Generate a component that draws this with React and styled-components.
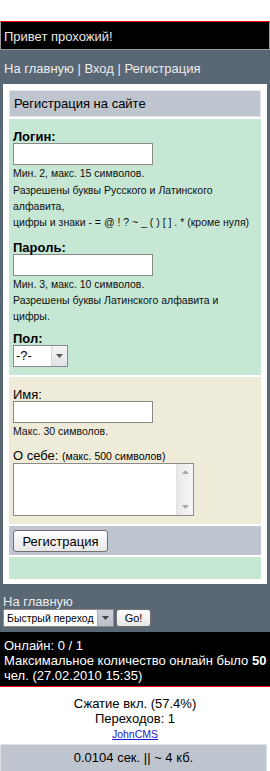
import React from 'react'
import styled, { createGlobalStyle } from 'styled-components'

const GlobalStyle = createGlobalStyle`
  body {
    margin: 0;
    background: #fff;
  }
`

const Page = styled.div`
  width: 270px;
  font-family: "Liberation Sans", Arial, sans-serif;
  font-size: 13px;
  line-height: 15px;
  color: #000;
`

const TopSpace = styled.div`
  height: 21px;
`

const Hello = styled.div`
  background: #000;
  color: #e8e8e8;
  border: 1px solid #999;
  border-top-color: #f00;
  padding: 7px 3px 5px;
`

const Main = styled.div`
  background: #5a6774;
`

const Nav = styled.div`
  padding: 10.5px 4px 8.5px;
  color: #ececec;
`

const NavLink = styled.a`
  color: inherit;
  text-decoration: none;
`

const Box = styled.div`
  margin: 0 3px;
  background: #fff;
  padding: 6px 6px 5px;
  display: flex;
  flex-direction: column;
  gap: 2px;
`

const Title = styled.div`
  background: #bec5cf;
  border: 1px solid #e2e6ea;
  padding: 5px 4px;
`

const Section = styled.div`
  background: ${p => p.$bg};
  padding: ${p => p.$pad};
  min-height: ${p => p.$h || 0}px;
`

const Label = styled.div`
  font-weight: ${p => (p.$bold ? 'bold' : 'normal')};
  line-height: 13px;
  margin-top: ${p => p.$mt}px;
  white-space: nowrap;
`

const TextInput = styled.input`
  display: block;
  box-sizing: border-box;
  width: 140px;
  height: 22px;
  margin: 0;
  padding: 2px 3px;
  border: 1px solid #8a8a8a;
  background: #fff;
  font: 13px "Liberation Sans", Arial, sans-serif;
`

const Hint = styled.div`
  font-size: 10.5px;
  line-height: 16.3px;
  white-space: nowrap;
  color: #111;
`

const SmallNote = styled.span`
  font-size: 10.5px;
  line-height: 13px;
`

const SelectBox = styled.div`
  display: flex;
  box-sizing: border-box;
  width: ${p => p.$w}px;
  height: ${p => p.$h}px;
  border: 1px solid #8a8a8a;
  background: #fff;
`

const SelectField = styled.select`
  appearance: none;
  flex: 1;
  min-width: 0;
  border: 0;
  margin: 0;
  padding: 0 0 0 ${p => p.$pl}px;
  background: transparent;
  font-family: "Liberation Sans", Arial, sans-serif;
  font-size: ${p => p.$fs}px;
  color: #000;
  outline: none;
`

const ArrowButton = styled.span`
  width: 15px;
  flex: none;
  display: flex;
  align-items: center;
  justify-content: center;
  border-left: 1px solid ${p => (p.$dark ? '#a9b0bc' : '#d4d8de')};
  background: ${p =>
    p.$dark
      ? 'linear-gradient(#ccd1d9, #b9c0cb)'
      : 'linear-gradient(#f3f4f6, #dfe2e7)'};
`

const TextAreaBox = styled.div`
  display: flex;
  box-sizing: border-box;
  width: 181px;
  height: 53px;
  border: 1px solid #8a8a8a;
  background: #fff;
`

const TextArea = styled.textarea`
  flex: 1;
  border: 0;
  margin: 0;
  resize: none;
  outline: none;
  background: transparent;
  overflow: hidden;
`

const ScrollBar = styled.div`
  width: 16px;
  display: flex;
  flex-direction: column;
  justify-content: space-between;
  border-left: 1px solid #e4e4e4;
  background: linear-gradient(90deg, #e9e9e9, #f7f7f7);
`

const ScrollArrow = styled.div`
  height: 16px;
  display: flex;
  align-items: center;
  justify-content: center;
`

const Button = styled.button`
  box-sizing: border-box;
  height: ${p => p.$h}px;
  width: ${p => p.$w}px;
  margin: 0 0 0 ${p => p.$ml || 0}px;
  padding: 0;
  border: 1px solid #707070;
  border-radius: 3px;
  background: linear-gradient(#ffffff, #e6e6e6);
  font-family: "Liberation Sans", Arial, sans-serif;
  font-size: ${p => p.$fs}px;
  color: #000;
`

const BottomNav = styled.div`
  padding: 10.5px 3px 5px;
  color: #ececec;
`

const BottomLink = styled.a`
  display: block;
  line-height: 14px;
  color: inherit;
  text-decoration: none;
`

const QuickRow = styled.div`
  display: flex;
  align-items: center;
`

const Online = styled.div`
  background: #000;
  color: #fff;
  padding: 5.8px 0 3.7px 4px;
  border-bottom: 1px solid #f00;
  white-space: nowrap;
`

const Credits = styled.div`
  text-align: center;
  padding-top: 8.4px;
  margin-bottom: 2.6px;
`

const SmallLink = styled.a`
  font-size: 10.5px;
  color: #1a1acc;
  text-decoration: underline;
`

const Timing = styled.div`
  margin-right: 3px;
  background: #bfc5cf;
  border: 1px solid #dde1e6;
  padding: 4.7px 0 8px;
  text-align: center;
`

const Triangle = ({ up, color }) => (
  <svg width='7' height='4' viewBox='0 0 7 4'>
    <path d={up ? 'M0 4 L3.5 0 L7 4 Z' : 'M0 0 L7 0 L3.5 4 Z'} fill={color} />
  </svg>
)

const App = () => {
  return (
    <Page>
      <GlobalStyle />
      <TopSpace />
      <Hello>Привет прохожий!</Hello>
      <Main>
        <Nav>
          <NavLink href='#'>На главную</NavLink> | <NavLink href='#'>Вход</NavLink> |{' '}
          <NavLink href='#'>Регистрация</NavLink>
        </Nav>
        <Box>
          <Title>Регистрация на сайте</Title>
          <Section $bg='#c5e7d4' $pad='0 4px 8.4px'>
            <Label $bold $mt={11.3}>Логин:</Label>
            <TextInput type='text' />
            <Hint>
              Мин. 2, макс. 15 символов.<br />
              Разрешены буквы Русского и Латинского<br />
              алфавита,<br />
              цифры и знаки - = @ ! ? ~ _ ( ) [ ] . * (кроме нуля)
            </Hint>
            <Label $bold $mt={10.1}>Пароль:</Label>
            <TextInput type='password' />
            <Hint>
              Мин. 3, макс. 10 символов.<br />
              Разрешены буквы Латинского алфавита и<br />
              цифры.
            </Hint>
            <Label $bold $mt={7.1}>Пол:</Label>
            <SelectBox $w={55} $h={22}>
              <SelectField $fs={13} $pl={2} defaultValue='x'>
                <option value='x'>-?-</option>
                <option value='m'>М</option>
                <option value='z'>Ж</option>
              </SelectField>
              <ArrowButton>
                <Triangle color='#555' />
              </ArrowButton>
            </SelectBox>
          </Section>
          <Section $bg='#eeebd9' $pad='0 4px 8px'>
            <Label $mt={11.3}>Имя:</Label>
            <TextInput type='text' />
            <Hint>Макс. 30 символов.</Hint>
            <Label $mt={9.7}>
              О себе: <SmallNote>(макс. 500 символов)</SmallNote>
            </Label>
            <TextAreaBox>
              <TextArea />
              <ScrollBar>
                <ScrollArrow>
                  <Triangle up color='#a8a8a8' />
                </ScrollArrow>
                <ScrollArrow>
                  <Triangle color='#a8a8a8' />
                </ScrollArrow>
              </ScrollBar>
            </TextAreaBox>
          </Section>
          <Section $bg='#bfc5cf' $pad='4px 4px 3px'>
            <Button $w={95} $h={22} $fs={13}>Регистрация</Button>
          </Section>
          <Section $bg='#c5e7d4' $pad='0' $h={22} />
        </Box>
        <BottomNav>
          <BottomLink href='#'>На главную</BottomLink>
          <QuickRow>
            <SelectBox $w={111} $h={18}>
              <SelectField $fs={10.5} $pl={3} defaultValue='q'>
                <option value='q'>Быстрый переход</option>
              </SelectField>
              <ArrowButton $dark>
                <Triangle color='#444' />
              </ArrowButton>
            </SelectBox>
            <Button $w={35} $h={18} $fs={11} $ml={2}>Go!</Button>
          </QuickRow>
        </BottomNav>
      </Main>
      <Online>
        Онлайн: 0 / 1<br />
        Максимальное количество онлайн было <b>50</b>
        <br />
        чел. (27.02.2010 15:35)
      </Online>
      <Credits>
        <div>Сжатие вкл. (57.4%)</div>
        <div>Переходов: 1</div>
        <div>
          <SmallLink href='#'>JohnCMS</SmallLink>
        </div>
      </Credits>
      <Timing>0.0104 сек. || ~ 4 кб.</Timing>
    </Page>
  )
}

export default App
